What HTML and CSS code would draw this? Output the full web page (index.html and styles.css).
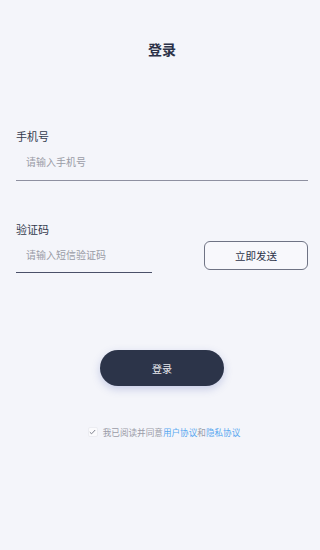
FILE: index.html
```html
<!DOCTYPE html>
<html lang="zh-CN">

<head>
    <meta charset="UTF-8">
    <meta name="viewport" content="width=device-width, initial-scale=1.0">
    <title>登录</title>
    <link rel="stylesheet" href="styles.css">
</head>

<body>
    <div class="page">
        <div class="title">登录</div>
        <div class="field">
            <div class="label">手机号</div>
            <input type="text" class="input-text" placeholder="请输入手机号">
        </div>
        <div class="field field-code">
            <div class="label">验证码</div>
            <div class="code-row">
                <input type="text" class="input-text input-code" placeholder="请输入短信验证码">
                <button class="send-btn" type="button">立即发送</button>
            </div>
        </div>
        <div class="login-box">
            <button class="login-btn" type="button">登录</button>
        </div>
        <div class="agree">
            <span class="check">
                <svg width="7" height="6" viewBox="0 0 7 6">
                    <path d="M0.8 3.2 L2.6 4.8 L6.2 1" fill="none" stroke="#7d808c" stroke-width="1" />
                </svg>
            </span>
            <span class="agree-text">我已阅读并同意<a class="link">用户协议</a>和<a class="link">隐私协议</a></span>
        </div>
    </div>
</body>

</html>
```

FILE: styles.css
```css
* {
    box-sizing: border-box;
    margin: 0;
}

body {
    background-color: #f4f5fa;
    font-family: "Noto Sans CJK SC", "Noto Sans", sans-serif;
    color: #2c3349;
}

.page {
    padding: 39px 12px 0 16px;
}

.title {
    text-align: center;
    font-size: 14px;
    line-height: 20px;
    font-weight: bold;
    color: #2b3147;
}

.field {
    margin-top: 69px;
}

.field-code {
    margin-top: 40px;
}

.label {
    font-size: 11px;
    line-height: 16px;
    color: #333a4d;
}

.input-text {
    display: block;
    width: 100%;
    height: 37px;
    border: none;
    border-bottom: 1px solid #8e90a0;
    background: transparent;
    padding: 0 0 1px 10px;
    font-family: inherit;
    font-size: 10px;
    color: #2c3349;
    outline: none;
}

.input-text::placeholder {
    color: #9a9ca6;
}

.code-row {
    display: flex;
    align-items: center;
}

.input-code {
    width: 136px;
    height: 36px;
    border-bottom-color: #4a5068;
}

.send-btn {
    margin-left: auto;
    width: 104px;
    height: 29px;
    border: 1px solid #6f7384;
    border-radius: 6px;
    background-color: #f8f8fc;
    font-family: inherit;
    font-size: 10.5px;
    color: #2c3349;
}

.login-box {
    display: flex;
    justify-content: center;
    margin-top: 77px;
}

.login-btn {
    width: 124px;
    height: 36px;
    border: none;
    border-radius: 18px;
    background-color: #2c3449;
    box-shadow: 0 3px 8px rgba(60, 80, 170, 0.25);
    font-family: inherit;
    font-size: 10px;
    color: #e8e9ee;
}

.agree {
    display: flex;
    justify-content: center;
    align-items: center;
    margin-top: 40px;
    padding-left: 4px;
}

.check {
    display: flex;
    justify-content: center;
    align-items: center;
    width: 10px;
    height: 10px;
    margin-right: 5px;
    border-radius: 2px;
    background-color: #fbfbfd;
    border: 1px solid #ecedf2;
}

.agree-text {
    font-size: 8.6px;
    line-height: 12px;
    color: #9a9ca8;
}

.link {
    color: #5aa9f0;
}
```
